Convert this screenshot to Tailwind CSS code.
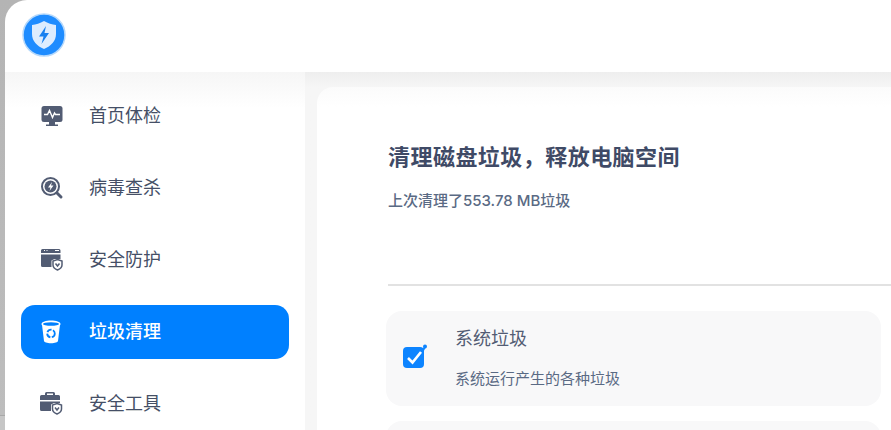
<!DOCTYPE html>
<html lang="zh-CN">
<head>
<meta charset="utf-8">
<script src="https://cdn.jsdelivr.net/npm/@tailwindcss/browser@4"></script>
</head>
<body class="w-[891px] h-[430px] overflow-hidden bg-[linear-gradient(#b4b4b4,#bdbdbd_415px,#a8a8a8_415px,#a8a8a8_416px,#c6c6c6_416px)] font-['Inter','Noto_Sans_CJK_SC',sans-serif]">
<div class="ml-[5px] w-[886px] h-[430px] bg-white rounded-tl-[22px] overflow-hidden flex flex-col">
  <header class="h-[72px] shrink-0 flex items-center pl-[17px] pb-[3px]">
    <svg width="44" height="44" viewBox="0 0 44 44">
      <circle cx="22" cy="22" r="21" fill="#1e8cff" stroke="#b5d8fb" stroke-width="1.500"/>
      <path d="M22 8 C26 10.500 30 11.500 34 12 L34 21 C34 28 29 33 22 36 C15 33 10 28 10 21 L10 12 C14 11.500 18 10.500 22 8Z" fill="#dcecfe"/>
      <path d="M24 13 L17 23.500 L21.500 23.500 L19.500 31 L27 20 L22.500 20 Z" fill="#1780f0"/>
    </svg>
  </header>
  <div class="flex-1 flex min-h-0">
    <nav class="w-[300px] shrink-0 bg-gradient-to-b from-[#f6f6f6] to-white to-[36px] pt-[17px] pl-[16px] pr-[16px] flex flex-col gap-[18px] text-[18px] text-[#454f66]">
      <a class="h-[54px] flex items-center pl-[19px] rounded-[14px]">
        <svg class="w-[24px] h-[24px] mr-[25px]" viewBox="0 0 24 24"><rect x="1.500" y="2" width="21" height="16" rx="2.500" fill="#525c73"/><path d="M9 18h6v2.500h3v1.500H6v-1.500h3z" fill="#525c73"/><path d="M4 10.500h3.500l2-4 3 7 2-4.500 1 1.500H20" fill="none" stroke="#fff" stroke-width="1.400"/></svg>
        <span>首页体检</span>
      </a>
      <a class="h-[54px] flex items-center pl-[19px] rounded-[14px]">
        <svg class="w-[24px] h-[24px] mr-[25px]" viewBox="0 0 24 24"><circle cx="10.500" cy="10.500" r="8.500" fill="none" stroke="#525c73" stroke-width="2"/><circle cx="10.500" cy="10.500" r="6" fill="#525c73"/><path d="M12 6 L8 11.500h2.500L9.500 15l4-5.500H11z" fill="#fff"/><path d="M17 17l4 4" stroke="#525c73" stroke-width="3" stroke-linecap="round"/></svg>
        <span>病毒查杀</span>
      </a>
      <a class="h-[54px] flex items-center pl-[19px] rounded-[14px]">
        <svg class="w-[24px] h-[24px] mr-[25px]" viewBox="0 0 24 24"><path d="M1 3.500a1.500 1.500 0 0 1 1.500-1.500H19a1.500 1.500 0 0 1 1.500 1.500V6H1z" fill="#525c73"/><path d="M4 3.500h1M6.500 3.500h1M15 3.500h4" stroke="#fff" stroke-width="1"/><path d="M1 7.500h19.500V12h-6l-3 1.500V20H2.500A1.500 1.500 0 0 1 1 18.500z" fill="#525c73"/><path d="M17.500 12.500l4.500 1.500v4c0 2.500-2 4-4.500 5-2.500-1-4.500-2.500-4.500-5v-4z" fill="#fff" stroke="#525c73" stroke-width="1.500"/><path d="M15.500 16.500l2 2.500 2-2.500" fill="none" stroke="#525c73" stroke-width="1.500"/></svg>
        <span>安全防护</span>
      </a>
      <a class="h-[54px] flex items-center pl-[19px] rounded-[14px] bg-[#0080ff] text-white font-medium translate-y-[1px]">
        <svg class="w-[24px] h-[24px] mr-[25px]" viewBox="0 0 24 24"><path d="M1.500 4C1.500 2 6 .5 11 .5S20.500 2 20.500 4c0 .5-.2 1-.6 1.400L18 21c-.2 1.200-3 2.200-7 2.200S4.200 22.200 4 21L2.100 5.400C1.700 5 1.500 4.500 1.500 4z" fill="#fff"/><ellipse cx="11" cy="4" rx="8" ry="1.800" fill="#0080ff"/><circle cx="11" cy="13.500" r="3.800" fill="none" stroke="#0080ff" stroke-width="1.800" stroke-dasharray="5 1.500"/></svg>
        <span class="-translate-y-[1px]">垃圾清理</span>
      </a>
      <a class="h-[54px] flex items-center pl-[19px] rounded-[14px]">
        <svg class="w-[24px] h-[24px] mr-[25px]" viewBox="0 0 24 24"><path d="M7 4V2.500h6V4h2V2.500A1.500 1.500 0 0 0 13.500 1h-7A1.500 1.500 0 0 0 5 2.500V4z" fill="#525c73"/><path d="M0 5.500A1.500 1.500 0 0 1 1.500 4h17A1.500 1.500 0 0 1 20 5.500V9H0z" fill="#525c73"/><path d="M0 10.500h20V12h-6l-3 1.500V20H1.500A1.500 1.500 0 0 1 0 18.500z" fill="#525c73"/><path d="M17 12.500l4.500 1.500v4c0 2.500-2 4-4.500 5-2.500-1-4.500-2.500-4.500-5v-4z" fill="#fff" stroke="#525c73" stroke-width="1.500"/><path d="M15 16.500l2 2.500 2-2.500" fill="none" stroke="#525c73" stroke-width="1.500"/></svg>
        <span>安全工具</span>
      </a>
    </nav>
    <main class="flex-1 bg-gradient-to-b from-[#eeeeee] to-[#f6f6f6] to-[16px] pt-[15px] pl-[12px] min-w-0">
      <section class="h-[400px] bg-gradient-to-b from-[#fbfbfb] to-white to-[20px] rounded-tl-[16px] pl-[71px] pt-[54px]">
        <h1 class="text-[22px] leading-[32px] font-bold tracking-[0.46px] text-[#3f4a66]">清理磁盘垃圾，释放电脑空间</h1>
        <p class="mt-[17px] text-[15px] leading-[22px] font-medium text-[#5a6a84]">上次清理了553.78 MB垃圾</p>
        <div class="mt-[72px] h-[2px] bg-[#e2e2e2]"></div>
        <div class="mt-[25px] -ml-[2px] mr-[10px] h-[95px] rounded-[16px] bg-[#f8f8f9] flex items-center pl-[17px]">
          <svg class="w-[25px] h-[25px] mr-[27px] -mt-[4px]" viewBox="0 0 25 25"><rect x="0" y="3" width="21" height="21" rx="4" fill="#0d84ff"/><path d="M5 14l4.500 4.500L18 8" fill="none" stroke="#fff" stroke-width="2.600"/><path d="M19 8l3-5" stroke="#0d84ff" stroke-width="2"/><circle cx="22" cy="2.500" r="2" fill="#0d84ff"/></svg>
          <div class="-translate-y-[1px]">
            <div class="text-[18px] leading-[26px] text-[#525c73]">系统垃圾</div>
            <div class="mt-[16px] text-[15px] leading-[22px] text-[#5a6a84]">系统运行产生的各种垃圾</div>
          </div>
        </div>
        <div class="mt-[15px] -ml-[2px] mr-[10px] h-[95px] rounded-[16px] bg-[#f8f8f9]"></div>
      </section>
    </main>
  </div>
</div>
</body>
</html>
